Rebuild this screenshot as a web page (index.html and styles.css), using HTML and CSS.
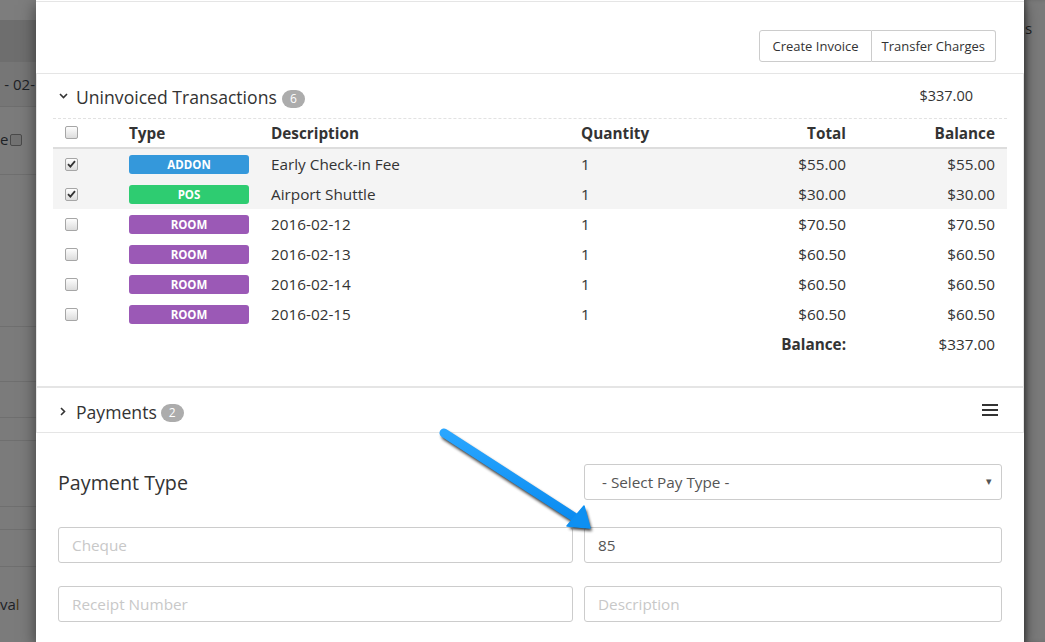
FILE: index.html
```html
<!DOCTYPE html>
<html>
<head>
<meta charset="utf-8">
<title>Uninvoiced Transactions</title>
<link rel="stylesheet" href="styles.css">
</head>
<body>
<div class="page">
  <aside class="bg bg-left">
    <div class="band b1"></div>
    <div class="band b2"></div>
    <div class="band b3"><span class="bgtext">- 02-</span></div>
    <div class="band b4"><span class="bgtext">e</span><span class="bgcb"></span></div>
    <div class="band b5"></div>
    <div class="band b6"></div>
    <div class="band b7"></div>
    <div class="band b8"></div>
    <div class="band b9"></div>
    <div class="band b10"></div>
    <div class="band b11"></div>
    <div class="band b12"><span class="bgtext">va<span class="bgwarn">l</span></span></div>
  </aside>

  <main class="modal">
    <div class="modal-top"></div>
    <div class="toolbar">
      <div class="btn-group">
        <button class="btn">Create Invoice</button>
        <button class="btn">Transfer Charges</button>
      </div>
    </div>

    <section class="panel panel-trans">
      <div class="panel-head">
        <span class="chev"><svg width="9" height="6" viewBox="0 0 9 6"><path d="M1 1 L4.5 4.5 L8 1" fill="none" stroke="#333" stroke-width="1.6"/></svg></span>
        <span class="panel-title">Uninvoiced Transactions</span>
        <span class="badge">6</span>
        <span class="head-total">$337.00</span>
      </div>
      <div class="tbl">
        <div class="tr th">
          <div class="td"><span class="cb"></span></div>
          <div class="td">Type</div>
          <div class="td">Description</div>
          <div class="td">Quantity</div>
          <div class="td num">Total</div>
          <div class="td num">Balance</div>
        </div>
        <div class="tr sel">
          <div class="td"><span class="cb checked"><svg width="9" height="8" viewBox="0 0 9 8"><path d="M1 4.2 L3.4 6.6 L8 1.2" fill="none" stroke="#333" stroke-width="1.8"/></svg></span></div>
          <div class="td"><span class="lbl addon">ADDON</span></div>
          <div class="td">Early Check-in Fee</div>
          <div class="td">1</div>
          <div class="td num">$55.00</div>
          <div class="td num">$55.00</div>
        </div>
        <div class="tr sel">
          <div class="td"><span class="cb checked"><svg width="9" height="8" viewBox="0 0 9 8"><path d="M1 4.2 L3.4 6.6 L8 1.2" fill="none" stroke="#333" stroke-width="1.8"/></svg></span></div>
          <div class="td"><span class="lbl pos">POS</span></div>
          <div class="td">Airport Shuttle</div>
          <div class="td">1</div>
          <div class="td num">$30.00</div>
          <div class="td num">$30.00</div>
        </div>
        <div class="tr">
          <div class="td"><span class="cb"></span></div>
          <div class="td"><span class="lbl room">ROOM</span></div>
          <div class="td">2016-02-12</div>
          <div class="td">1</div>
          <div class="td num">$70.50</div>
          <div class="td num">$70.50</div>
        </div>
        <div class="tr">
          <div class="td"><span class="cb"></span></div>
          <div class="td"><span class="lbl room">ROOM</span></div>
          <div class="td">2016-02-13</div>
          <div class="td">1</div>
          <div class="td num">$60.50</div>
          <div class="td num">$60.50</div>
        </div>
        <div class="tr">
          <div class="td"><span class="cb"></span></div>
          <div class="td"><span class="lbl room">ROOM</span></div>
          <div class="td">2016-02-14</div>
          <div class="td">1</div>
          <div class="td num">$60.50</div>
          <div class="td num">$60.50</div>
        </div>
        <div class="tr">
          <div class="td"><span class="cb"></span></div>
          <div class="td"><span class="lbl room">ROOM</span></div>
          <div class="td">2016-02-15</div>
          <div class="td">1</div>
          <div class="td num">$60.50</div>
          <div class="td num">$60.50</div>
        </div>
        <div class="tr total-row">
          <div class="td"></div>
          <div class="td"></div>
          <div class="td"></div>
          <div class="td"></div>
          <div class="td num strong">Balance:</div>
          <div class="td num">$337.00</div>
        </div>
      </div>
    </section>

    <section class="panel panel-pay">
      <div class="panel-head">
        <span class="chev"><svg width="6" height="9" viewBox="0 0 6 9"><path d="M1 1 L4.5 4.5 L1 8" fill="none" stroke="#333" stroke-width="1.6"/></svg></span>
        <span class="panel-title">Payments</span>
        <span class="badge">2</span>
        <span class="menu"><i></i><i></i><i></i></span>
      </div>
    </section>

    <div class="form">
      <div class="frow r1">
        <div class="ptype">Payment Type</div>
        <div class="select"><span>- Select Pay Type -</span><span class="caret">&#9662;</span></div>
      </div>
      <div class="frow r2">
        <input class="input" type="text" placeholder="Cheque">
        <input class="input" type="text" value="85">
      </div>
      <div class="frow r3">
        <input class="input" type="text" placeholder="Receipt Number">
        <input class="input" type="text" placeholder="Description">
      </div>
    </div>
  </main>

  <aside class="bg bg-right">
    <div class="rtext">s</div>
  </aside>
</div>

<svg class="arrow" width="1045" height="642" viewBox="0 0 1045 642">
  <defs>
    <filter id="sh" x="-20%" y="-20%" width="140%" height="140%">
      <feGaussianBlur stdDeviation="1.6"/>
    </filter>
    <linearGradient id="ag" x1="0" y1="0" x2="0" y2="1">
      <stop offset="0" stop-color="#2aa6ff"/>
      <stop offset="1" stop-color="#0b8cf0"/>
    </linearGradient>
  </defs>
  <g transform="translate(2 3)" filter="url(#sh)" opacity="0.75">
    <line x1="444" y1="433" x2="574" y2="517" stroke="#000" stroke-width="9" stroke-linecap="round"/>
    <polygon points="590,528 567,526 584,506" fill="#000"/>
  </g>
  <line x1="444" y1="433" x2="574" y2="517" stroke="url(#ag)" stroke-width="9" stroke-linecap="round"/>
  <polygon points="590,528 567,526 584,506" fill="#0e90f2" stroke="#0e90f2" stroke-width="1.5" stroke-linejoin="round"/>
</svg>
</body>
</html>
```

FILE: styles.css
```css
* { box-sizing: border-box; }

html, body {
  margin: 0;
  padding: 0;
  width: 1045px;
  height: 642px;
  overflow: hidden;
  font-family: "Open Sans", "Liberation Sans", sans-serif;
  color: #333;
  background: #7b7b7b;
}

.page {
  display: grid;
  grid-template-columns: 36px 988px 21px;
  height: 642px;
  position: relative;
}

/* ---------- dimmed page behind the modal ---------- */
.bg {
  background: #7b7b7b;
  overflow: hidden;
  font-size: 14px;
  color: #1e2226;
}

.bg-left {
  display: flex;
  flex-direction: column;
}

.band {
  display: flex;
  align-items: center;
  justify-content: flex-end;
  white-space: nowrap;
  flex: none;
}

.b1 { height: 20px; background: #7d7d7d; }
.b2 { height: 42px; background: #6e6e6e; }
.b3 { height: 44px; background: #767676; padding-right: 1px; }
.b4 { height: 68px; background: #7b7b7b; border-top: 1px solid #6e6e6e; align-items: flex-start; justify-content: flex-start; padding-top: 22px; gap: 2px; }
.b5 { height: 152px; border-top: 1px solid #6f6f6f; }
.b6 { height: 55px; border-top: 1px solid #6f6f6f; }
.b7 { height: 36px; border-top: 1px solid #6f6f6f; }
.b8 { height: 23px; border-top: 1px solid #6f6f6f; }
.b9 { height: 66px; border-top: 1px solid #6f6f6f; }
.b10 { height: 23px; border-top: 1px solid #6f6f6f; }
.b11 { height: 37px; border-top: 1px solid #6f6f6f; }
.b12 { flex: 1; border-top: 1px solid #6f6f6f; align-items: flex-start; justify-content: flex-start; padding-top: 27px; }

.bgtext { font-size: 15px; }
.bgwarn { color: #4a3510; }

.bgcb {
  width: 12px;
  height: 12px;
  border: 1px solid #4a4a4a;
  border-radius: 2px;
  background: #727272;
  margin-top: 5px;
}

.bg-right {
  box-shadow: inset 4px 0 5px -2px rgba(0,0,0,0.35);
}

.rtext {
  padding: 18px 0 0 1px;
  font-size: 15px;
  color: #1e1e1e;
}

/* ---------- modal ---------- */
.modal {
  background: #fff;
  box-shadow: 0 5px 15px rgba(0,0,0,0.5);
  position: relative;
  z-index: 1;
  font-size: 15.3px;
}

.modal-top {
  height: 2px;
  border-bottom: 1px solid #e5e5e5;
}

.toolbar {
  height: 71px;
  padding: 28px 28px 0 0;
  display: flex;
  justify-content: flex-end;
  align-items: flex-start;
}

.btn-group {
  display: flex;
}

.btn {
  font-family: "Open Sans", "Liberation Sans", sans-serif;
  font-size: 13px;
  color: #333;
  background: #fff;
  border: 1px solid #ccc;
  height: 32px;
  padding: 0 11px 1px;
  margin: 0;
  line-height: 28px;
}

.btn:first-child {
  border-radius: 3px 0 0 3px;
  padding: 0 12px 1px;
}

.btn + .btn {
  border-left: none;
  border-radius: 0 3px 3px 0;
  padding: 0 10px 1px;
}

.panel {
  border: 1px solid #e5e5e5;
}

.panel-trans {
  padding-bottom: 27px;
}

.panel-head {
  height: 44px;
  display: flex;
  align-items: center;
  padding-left: 21px;
}

.chev {
  width: 10px;
  display: flex;
  justify-content: center;
  align-items: center;
  margin-right: 8px;
}

.panel-title {
  font-size: 17.6px;
  color: #333;
  line-height: 24px;
  margin-top: 1px;
}

.badge {
  display: inline-block;
  margin-left: 5px;
  margin-top: 5px;
  min-width: 23px;
  height: 18px;
  padding: 0 7px;
  border-radius: 9px;
  background: #acacac;
  color: #fff;
  font-size: 12px;
  line-height: 18px;
  text-align: center;
}

.head-total {
  margin-left: auto;
  padding-right: 50px;
  font-size: 14.5px;
  margin-top: -2px;
}

.tbl {
  margin: 0 16px 0 16px;
  border-top: 1px dashed #e2e2e2;
}

.tr {
  display: grid;
  grid-template-columns: 76px 142px 310px 119px 157px 149px;
  height: 30px;
  align-items: center;
}

.tr.th {
  height: 30px;
  border-bottom: 2px solid #ddd;
  font-weight: 700;
  padding-bottom: 1px;
}

.tr.sel {
  background: #f4f4f4;
}

.td {
  white-space: nowrap;
  display: flex;
  align-items: center;
}

.td.num {
  justify-content: flex-end;
  padding-right: 11px;
}

.td.strong {
  font-weight: 700;
}

.cb {
  width: 13px;
  height: 13px;
  margin-left: 12px;
  border: 1px solid #a6a6a6;
  border-radius: 2px;
  background: linear-gradient(#fdfdfd, #dcdcdc);
  display: flex;
  align-items: center;
  justify-content: center;
}

.lbl {
  display: block;
  width: 120px;
  height: 19px;
  border-radius: 3px;
  color: #fff;
  font-size: 11.5px;
  font-weight: 700;
  line-height: 19px;
  text-align: center;
}

.lbl.addon { background: #3498db; }
.lbl.pos { background: #2ecc71; }
.lbl.room { background: #9b59b6; }

.panel-pay {
  border-top: 1px solid #e5e5e5;
}

.panel-pay .panel-head {
  padding-right: 25px;
}

.panel-pay .panel-title {
  margin-top: 3px;
}

.panel-pay .chev {
  margin-top: 2px;
}

.panel-pay .badge {
  margin-left: 4px;
  margin-top: 6px;
}

.menu {
  margin-left: auto;
  width: 16px;
  display: flex;
  flex-direction: column;
  gap: 3px;
}

.menu i {
  display: block;
  height: 2px;
  background: #333;
}

/* ---------- form ---------- */
.form {
  padding: 31px 22px 0 22px;
}

.frow {
  display: grid;
  grid-template-columns: 515px 418px;
  column-gap: 11px;
  align-items: center;
}

.r1 { margin-bottom: 27px; }
.r2 { margin-bottom: 23px; }

.ptype {
  font-size: 19.7px;
  color: #333;
}

.select {
  height: 36px;
  border: 1px solid #ccc;
  border-radius: 3px;
  display: flex;
  align-items: center;
  justify-content: space-between;
  padding: 0 9px 0 17px;
  color: #555;
  font-size: 15.3px;
}

.caret {
  font-size: 11px;
  color: #555;
  margin-top: -3px;
}

.input {
  height: 36px;
  border: 1px solid #ccc;
  border-radius: 3px;
  padding: 0 13px;
  font-family: "Open Sans", "Liberation Sans", sans-serif;
  font-size: 15.3px;
  color: #555;
  width: 100%;
  margin: 0;
  outline: none;
  background: #fff;
}

.input::placeholder {
  color: #c8c8c8;
}

/* annotation arrow drawn over the screenshot */
.arrow {
  position: absolute;
  left: 0;
  top: 0;
  z-index: 5;
  pointer-events: none;
}
```
